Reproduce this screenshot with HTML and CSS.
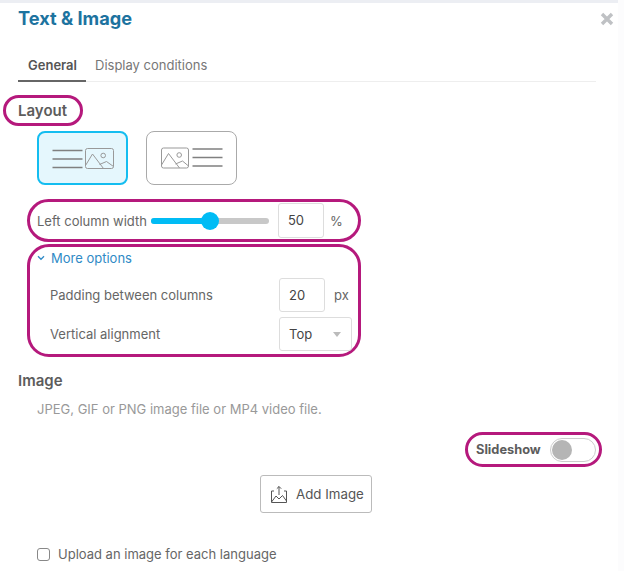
FILE: index.html
```html
<!DOCTYPE html>
<html>
<head>
	<title>Text &amp; Image</title>
	<link rel="stylesheet" href="styles.css">
</head>
<body>
	<div class="panel">
		<div class="header">
			<h1 class="title">Text &amp; Image</h1>
			<svg class="closeIcon" width="14" height="14" viewBox="0 0 14 14"><path d="M2 2L12 12M12 2L2 12" stroke="#bfc1c4" stroke-width="3.4" fill="none"/></svg>
		</div>
		<div class="tabs">
			<div class="tab active">General</div>
			<div class="tab">Display conditions</div>
		</div>

		<div class="ring layoutRing"><h2 class="heading">Layout</h2></div>
		<div class="layoutOptions">
			<div class="option selected">
				<svg width="64" height="24" viewBox="0 0 64 24">
					<path d="M1.500 4.500H31.500M1.500 13H31.500M1.500 21.500H31.500" stroke="#808080" stroke-width="1.300" fill="none"/>
					<g transform="translate(34.500 2.500)" fill="none" stroke="#999" stroke-width="1">
						<rect width="28" height="20" rx="2"/>
						<path d="M0 17L7 5.500L18 20M14 16L21 13L28 18"/>
						<circle cx="17.700" cy="7" r="2.300"/>
					</g>
				</svg>
			</div>
			<div class="option">
				<svg width="64" height="24" viewBox="0 0 64 24">
					<g transform="translate(1.500 2)" fill="none" stroke="#999" stroke-width="1">
						<rect width="27" height="20" rx="2"/>
						<path d="M0 17L7 5.500L18 20M14 16L21 13L27 18"/>
						<circle cx="17.700" cy="7" r="2.300"/>
					</g>
					<path d="M32.500 3H62.500M32.500 11.500H62.500M32.500 20H62.500" stroke="#808080" stroke-width="1.300" fill="none"/>
				</svg>
			</div>
		</div>

		<div class="ring widthRing">
			<span class="label">Left column width</span>
			<div class="slider"><div class="sliderFill"></div><div class="sliderThumb"></div></div>
			<div class="input">50</div>
			<span class="unit">%</span>
		</div>

		<div class="ring moreRing">
			<div class="moreLink">
				<svg width="8" height="6" viewBox="0 0 8 6"><path d="M1 1.300L4 4.300L7 1.300" stroke="#2f8ac6" stroke-width="1.300" fill="none"/></svg>
				<span>More options</span>
			</div>
			<div class="row paddingRow">
				<span class="label">Padding between columns</span>
				<div class="input">20</div>
				<span class="unit">px</span>
			</div>
			<div class="row">
				<span class="label">Vertical alignment</span>
				<div class="select"><span>Top</span><i class="caret"></i></div>
			</div>
		</div>

		<h2 class="heading imageHeading">Image</h2>
		<p class="hint">JPEG, GIF or PNG image file or MP4 video file.</p>

		<div class="slideshowLine">
			<div class="ring slideshowRing">
				<span class="slideshowLabel">Slideshow</span>
				<div class="toggle"><div class="toggleThumb"></div></div>
			</div>
		</div>

		<div class="addLine">
			<div class="addBtn">
				<svg width="18" height="18" viewBox="0 0 18 18" fill="none" stroke="#555" stroke-width="1">
					<path d="M4 6H1.500V17.500H16.500V6H14"/>
					<path d="M9 10V1.500M6.800 3.700L9 1.500L11.200 3.700"/>
					<path d="M1.500 17L6 11L9 14L12.500 10.500L16.500 16"/>
				</svg>
				<span>Add Image</span>
			</div>
		</div>

		<label class="checkLine"><span class="checkbox"></span><span>Upload an image for each language</span></label>
	</div>
</body>
</html>
```

FILE: styles.css
```css
*{
	padding:0;
	margin:0;
	box-sizing:border-box;
}
body{
	width:624px;
	height:571px;
	overflow:hidden;
	background-color:#fcfcfd;
	font-family:Inter,"Liberation Sans",sans-serif;
	font-size:13px;
	color:#666;
}
.panel{
	width:618px;
	height:571px;
	background-color:#fff;
	border-top:3px solid #eceef3;
	padding-left:18px;
}

.header{
	display:flex;
	justify-content:space-between;
	align-items:center;
	height:31px;
	padding-right:4px;
}
.title{
	font-size:18.200px;
	line-height:31px;
	font-weight:700;
	color:#1d739f;
}
.closeIcon{
	margin-top:1px;
}

.tabs{
	display:flex;
	width:578px;
	height:33px;
	margin-top:15px;
	border-bottom:1px solid #eee;
}
.tab{
	padding:0 9px;
	line-height:33px;
	color:#777;
}
.tab.active{
	width:68px;
	height:33px;
	padding-left:10px;
	font-weight:600;
	color:#555;
	border-bottom:2px solid #666;
}

.ring{
	border:3px solid #b5197c;
	border-radius:22px;
	display:flex;
	align-items:center;
}
.layoutRing{
	width:80px;
	height:31px;
	margin:13px 0 0 -15px;
	padding-left:12px;
}
.heading{
	font-size:15px;
	font-weight:600;
	color:#5c5c5c;
}

.layoutOptions{
	display:flex;
	gap:18px;
	margin:5px 0 0 19px;
}
.option{
	display:flex;
	align-items:center;
	justify-content:center;
	width:91px;
	height:54px;
	border:1px solid #aaa;
	border-radius:8px;
}
.option.selected{
	border:2px solid #14bdf0;
	background-color:#e5f7fd;
}

.widthRing{
	width:334px;
	height:43px;
	margin:14px 0 0 9px;
	padding-left:7px;
}
.label{
	color:#666;
}
.slider{
	position:relative;
	width:118px;
	height:6px;
	margin-left:4px;
	border-radius:3px;
	background-color:#c8c8c8;
}
.sliderFill{
	width:59px;
	height:6px;
	border-radius:3px;
	background-color:#00bcf5;
}
.sliderThumb{
	position:absolute;
	left:50px;
	top:-6px;
	width:18px;
	height:18px;
	border-radius:50%;
	background-color:#00bcf5;
}
.input{
	width:46px;
	height:35px;
	line-height:33px;
	padding-left:9px;
	border:1px solid #ddd;
	border-radius:3px;
	color:#444;
}
.widthRing .input{
	margin-left:9px;
}
.unit{
	margin-left:6px;
	color:#666;
}

.moreRing{
	display:block;
	width:334px;
	height:113px;
	margin:2px 0 0 9px;
	padding:0 0 0 7px;
}
.moreLink{
	display:flex;
	align-items:center;
	gap:6px;
	height:22px;
	color:#2f8ac6;
}
.row{
	display:flex;
	align-items:center;
	padding-left:13px;
}
.row .label{
	width:229px;
}
.paddingRow{
	height:34px;
	margin-top:9px;
	margin-bottom:5px;
}
.paddingRow .input{
	height:34px;
	line-height:32px;
}
.paddingRow .unit{
	margin-left:9px;
}
.select{
	display:flex;
	align-items:center;
	justify-content:space-between;
	width:73px;
	height:34px;
	padding:0 10px 0 9px;
	border:1px solid #ddd;
	border-radius:3px;
	color:#444;
}
.caret{
	width:0;
	height:0;
	border-left:4px solid transparent;
	border-right:4px solid transparent;
	border-top:5px solid #bbb;
}

.imageHeading{
	margin-top:14px;
	line-height:19px;
}
.hint{
	margin:9px 0 0 19px;
	line-height:20px;
	color:#999;
}

.slideshowLine{
	display:flex;
	justify-content:flex-end;
	width:584px;
	margin-top:13px;
}
.slideshowRing{
	width:137px;
	height:35px;
	padding-left:8px;
}
.slideshowLabel{
	width:64px;
	font-size:12.800px;
	font-weight:700;
	color:#5c5c5c;
	white-space:nowrap;
}
.toggle{
	display:flex;
	align-items:center;
	width:46px;
	height:24px;
	margin-left:10px;
	padding-left:1px;
	border:1px solid #ccc;
	border-radius:12px;
}
.toggleThumb{
	width:20px;
	height:20px;
	border-radius:50%;
	background-color:#b5b5b5;
}

.addLine{
	display:flex;
	margin:8px 0 0 242px;
}
.addBtn{
	display:flex;
	align-items:center;
	gap:8px;
	width:112px;
	height:38px;
	padding-left:9px;
	border:1px solid #bbb;
	border-radius:3px;
	color:#555;
	font-size:13.300px;
}

.checkLine{
	display:flex;
	align-items:center;
	gap:8px;
	margin:32px 0 0 19px;
	line-height:18px;
	color:#666;
}
.checkbox{
	width:13px;
	height:13px;
	border:1px solid #888;
	border-radius:3px;
}
```
